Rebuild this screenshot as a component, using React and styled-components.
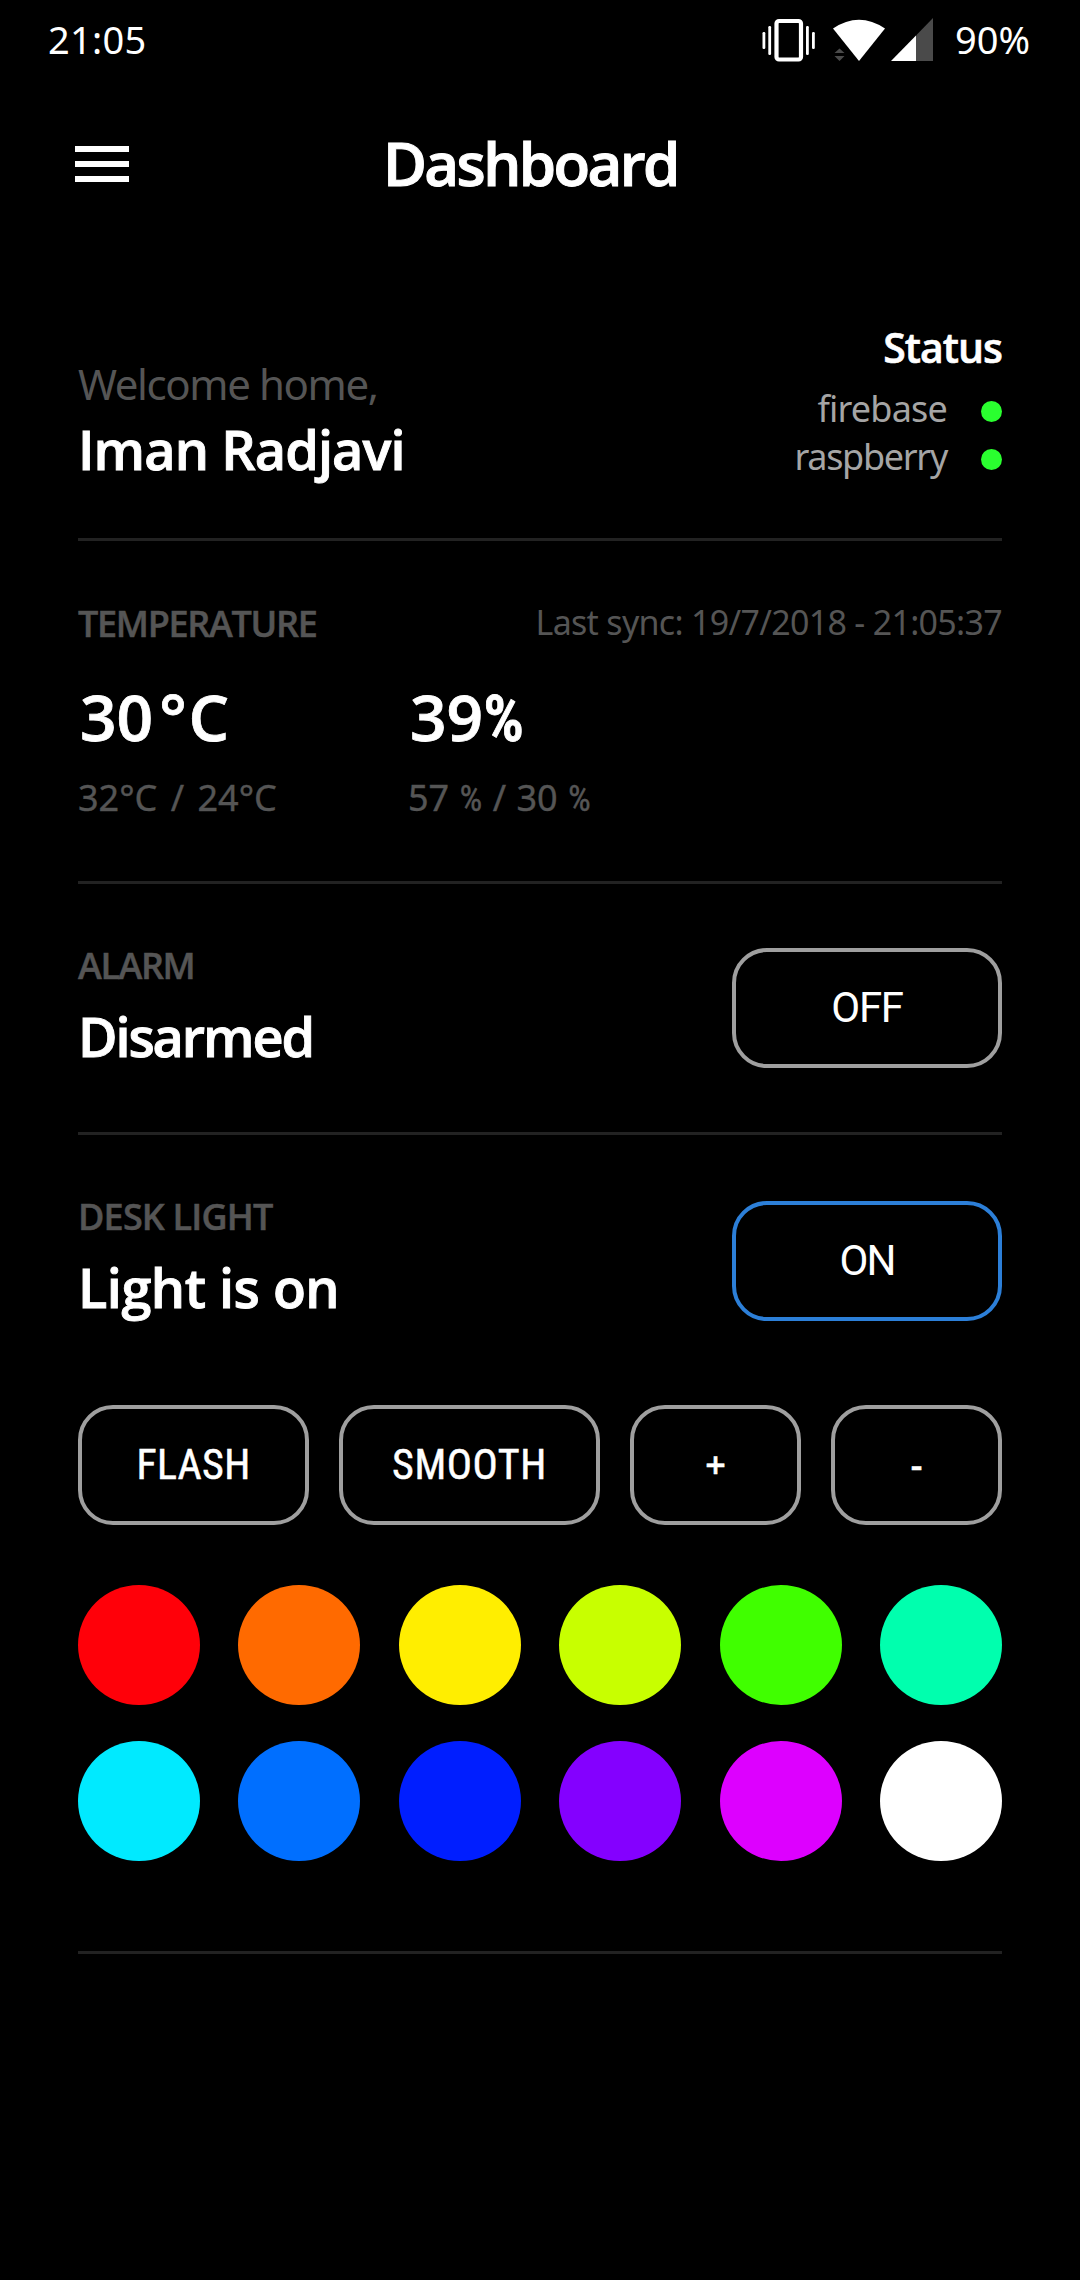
import React from "react";
import styled, { createGlobalStyle } from "styled-components";

const GlobalStyle = createGlobalStyle`
  *, *::before, *::after { box-sizing: border-box; }
  body {
    margin: 0;
    background: #000;
    color: #fff;
    font-family: "Open Sans", "Noto Sans", sans-serif;
  }
`;

const Screen = styled.main`
  min-height: 2280px;
  background: #000;
`;

/* Status bar */

const StatusBar = styled.div`
  display: flex;
  align-items: center;
  height: 79px;
  padding: 0 50px 0 48px;
  font-family: "Noto Sans", sans-serif;
  font-size: 38px;
  line-height: 79px;
`;

const Clock = styled.span`
  margin-right: auto;
  letter-spacing: 0.3px;
`;

const SystemIcons = styled.svg`
  display: block;
  width: 174px;
  height: 79px;
  margin-right: 19px;
`;

const Battery = styled.span`
  white-space: nowrap;
`;

/* Header */

const Header = styled.header`
  display: flex;
  align-items: center;
  height: 167px;
  padding-left: 75px;
`;

const MenuButton = styled.button`
  display: flex;
  flex-direction: column;
  gap: 9px;
  width: 54px;
  margin: 3px 254px 0 0;
  padding: 0;
  border: 0;
  background: none;
`;

const MenuBar = styled.span`
  height: 6px;
  background: #fff;
`;

const Title = styled.h1`
  margin: 0;
  font-size: 60px;
  font-weight: 600;
  line-height: 80px;
  letter-spacing: -2.6px;
  -webkit-text-stroke: 1px currentColor;
`;

/* Sections */

const Content = styled.div`
  padding: 0 78px;
`;

const Section = styled.section`
  padding: ${(p) => p.$top || 58}px 0 ${(p) => p.$bottom}px;
  border-bottom: 3px solid #222;
`;

const Split = styled.div`
  display: flex;
  justify-content: space-between;
  align-items: ${(p) => p.$align || "flex-start"};
`;

const Welcome = styled.p`
  margin: 0;
  color: #555;
  font-family: "Noto Sans", sans-serif;
  font-size: 42px;
  line-height: 67px;
  letter-spacing: -1.4px;
`;

const Heading = styled.h2`
  margin: ${(p) => p.$top || 0}px 0 0;
  font-size: 54px;
  font-weight: 600;
  line-height: ${(p) => p.$line || 66}px;
  letter-spacing: ${(p) => p.$track}px;
  -webkit-text-stroke: 0.9px currentColor;
`;

const Label = styled.h3`
  margin: 0;
  color: #555;
  font-size: 36px;
  font-weight: 600;
  line-height: 48px;
  letter-spacing: ${(p) => p.$track}px;
  -webkit-text-stroke: 0.5px currentColor;
`;

const StatusPanel = styled.div`
  padding-top: 12px;
`;

const StatusTitle = styled.h3`
  margin: 0 0 8px;
  font-size: 41px;
  font-weight: 600;
  line-height: 60px;
  letter-spacing: -1px;
  text-align: right;
  -webkit-text-stroke: 0.6px currentColor;
`;

const StatusItem = styled.div`
  display: flex;
  justify-content: flex-end;
  align-items: center;
  gap: 34px;
  color: #a5a5a5;
  font-family: "Noto Sans", sans-serif;
  font-size: 36px;
  line-height: 48px;
  letter-spacing: ${(p) => p.$track}px;
`;

const Dot = styled.span`
  width: 21px;
  height: 21px;
  margin-top: 5px;
  border-radius: 50%;
  background: #2aff2f;
`;

const Sync = styled.span`
  color: #555;
  font-family: "Noto Sans", sans-serif;
  font-size: 34px;
  line-height: 44px;
  letter-spacing: -0.7px;
`;

/* Readings */

const Readings = styled.div`
  display: grid;
  grid-template-columns: 330px 1fr;
  margin-top: 24px;
`;

const Reading = styled.div`
  padding-left: 2px;
  font-size: 64px;
  font-weight: 600;
  line-height: 90px;
  -webkit-text-stroke: 0.8px currentColor;
`;

const Range = styled.div`
  margin-top: 12px;
  color: #555;
  font-family: "Noto Sans", sans-serif;
  font-size: 36px;
  line-height: 48px;
  word-spacing: ${(p) => p.$gap}px;
  -webkit-text-stroke: 0.4px currentColor;
`;

const Degree = styled.span`
  margin: 0 2px 0 6px;
`;

const Percent = styled.span`
  font-family: Roboto, sans-serif;
  font-stretch: 75%;
  line-height: 1;
`;

/* Buttons */

const Button = styled.button`
  display: flex;
  justify-content: center;
  align-items: center;
  width: ${(p) => p.$width}px;
  height: 120px;
  margin: 0 0 ${(p) => p.$shift || 0}px;
  padding: 0 0 2px;
  border: 4px solid ${(p) => (p.$active ? "#2c7fd8" : "#9f9f9f")};
  border-radius: 35px;
  background: none;
  color: #fff;
  font-family: Roboto, sans-serif;
  font-size: 42px;
  font-stretch: ${(p) => (p.$wide ? "100%" : "75%")};
  letter-spacing: ${(p) => p.$track || 0}px;
  -webkit-text-stroke: ${(p) => (p.$wide ? 0 : 0.5)}px currentColor;
`;

const Symbol = styled.span`
  font-family: "Open Sans", sans-serif;
  font-size: 36px;
  font-weight: 600;
  font-stretch: 100%;
`;

const Modes = styled.div`
  display: flex;
  gap: 30px;
  margin-top: 85px;
`;

const Palette = styled.div`
  display: grid;
  grid-template-columns: repeat(6, 1fr);
  gap: 36px 38.7px;
  margin-top: 60px;
`;

const Swatch = styled.span`
  height: 120px;
  border-radius: 50%;
  background: ${(p) => p.$color};
`;

const COLORS = [
  "#ff0009", "#ff6a00", "#ffee00", "#c8ff00", "#40ff00", "#00ffae",
  "#00eaff", "#006fff", "#001eff", "#8400ff", "#dd00ff", "#ffffff",
];

const SERVICES = [
  { name: "firebase", track: -0.8 },
  { name: "raspberry", track: -1.3 },
];

export default function App() {
  return (
    <Screen>
      <GlobalStyle />
      <StatusBar>
        <Clock>21:05</Clock>
        <SystemIcons viewBox="762 0 174 79" fill="#fff">
          <rect x="776.5" y="21" width="24.5" height="38.5" rx="2.5" fill="none" stroke="#fff" strokeWidth="4.2" />
          <rect x="768.3" y="26" width="2.8" height="29" rx="1.2" />
          <rect x="762.5" y="32" width="2.8" height="17" rx="1.2" />
          <rect x="806" y="26" width="2.8" height="29" rx="1.2" />
          <rect x="812" y="32" width="2.8" height="17" rx="1.2" />
          <path d="M833 28.5Q859 11 885 28.5L859 61Z" />
          <path d="M834.5 53L839.5 48.5L844.5 53ZM834.5 56L844.5 56L839.5 61Z" fill="#4a4a4a" />
          <path d="M891 61L916 35.5V61Z" />
          <path d="M916 35.5L933 18V61H916Z" fill="#4a4a4a" />
        </SystemIcons>
        <Battery>90%</Battery>
      </StatusBar>

      <Header>
        <MenuButton aria-label="Menu">
          <MenuBar />
          <MenuBar />
          <MenuBar />
        </MenuButton>
        <Title>Dashboard</Title>
      </Header>

      <Content>
        <Section $top={59} $bottom={57}>
          <Split $align="flex-end">
            <div>
              <Welcome>Welcome home,</Welcome>
              <Heading $line={64} $track={-0.9}>Iman Radjavi</Heading>
            </div>
            <StatusPanel>
              <StatusTitle>Status</StatusTitle>
              {SERVICES.map((s) => (
                <StatusItem key={s.name} $track={s.track}>
                  {s.name}
                  <Dot />
                </StatusItem>
              ))}
            </StatusPanel>
          </Split>
        </Section>

        <Section $top={59} $bottom={59}>
          <Split>
            <Label $track={-1.3}>TEMPERATURE</Label>
            <Sync>Last sync: 19/7/2018 - 21:05:37</Sync>
          </Split>
          <Readings>
            <div>
              <Reading>30<Degree>°</Degree>C</Reading>
              <Range $gap={4}>32°C / 24°C</Range>
            </div>
            <div>
              <Reading>39<Percent>%</Percent></Reading>
              <Range $gap={1}>57 <Percent>%</Percent> / 30 <Percent>%</Percent></Range>
            </div>
          </Readings>
        </Section>

        <Section $bottom={63}>
          <Split $align="flex-end">
            <div>
              <Label $track={-1.4}>ALARM</Label>
              <Heading $top={13} $track={-2.1}>Disarmed</Heading>
            </div>
            <Button $width={270} $shift={1} $track={-1.3} $wide>OFF</Button>
          </Split>
        </Section>

        <Section $bottom={90}>
          <Split $align="flex-end">
            <div>
              <Label $track={-0.8}>DESK LIGHT</Label>
              <Heading $top={13} $track={-0.5}>Light is on</Heading>
            </div>
            <Button $width={270} $shift={-1} $track={-2} $wide $active>ON</Button>
          </Split>
          <Modes>
            <Button $width={231} $track={0.3}>FLASH</Button>
            <Button $width={261} $track={0.6}>SMOOTH</Button>
            <Button $width={171}><Symbol>+</Symbol></Button>
            <Button $width={171}><Symbol>-</Symbol></Button>
          </Modes>
          <Palette>
            {COLORS.map((c) => (
              <Swatch key={c} $color={c} />
            ))}
          </Palette>
        </Section>
      </Content>
    </Screen>
  );
}
